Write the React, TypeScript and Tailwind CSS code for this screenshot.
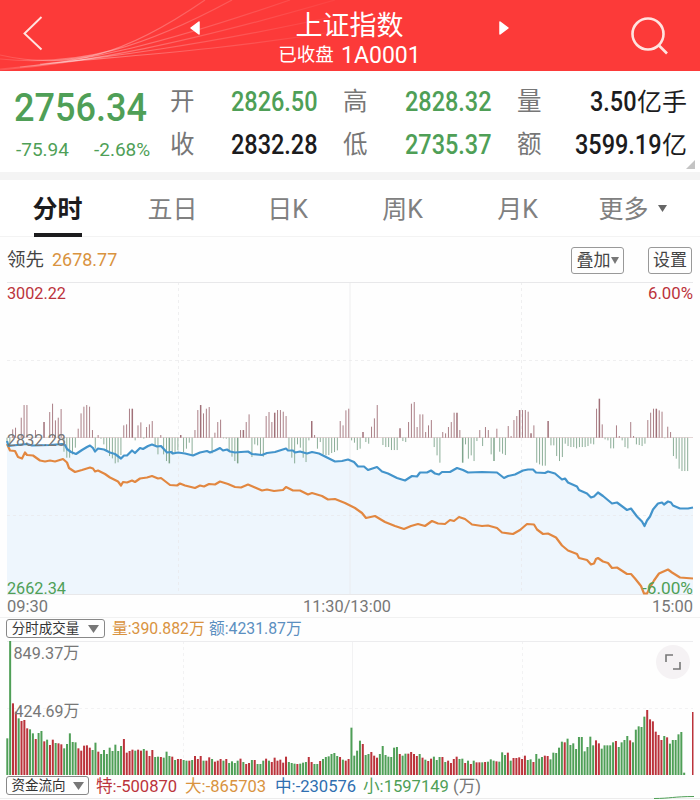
import React from 'react';
import clsx from 'clsx';

const GREEN = '#4f9f57';
const RED = '#bb333b';
const BLUE = '#4394cb';
const ORANGE = '#e28740';

// horizontal distance between two minutes on the price and volume charts
const STEP = 2.848;
const VOLUME_STEP = 2.844;

const indexLine =
  '7,441 8.5,446 17,445 27,444 32,445.500 50,445 62,444 65,445 67,449 71,452 76,454 82,450 87,447 90,445.500 93,448 95,451.500 98,448.500 104,449.500 110,452.500 115,454 121,458.500 124,455.500 127,455.500 132,450.500 135,453 140,448 143,449 148,446 152,444.500 157,446.500 161,446 167,452.500 171,452 173,453.500 178,452.500 185,453.500 193,455.500 200,452.500 207,451 210,452.500 215,450.500 220,448 223,450.500 227,449.500 230,451.500 235,452.500 241,452 248,451.500 252,454 262,455 267,453 275,452 286,448.500 288,450.500 293,450.500 295,452.500 300,451.500 307,453.500 312,452 319,453.500 325,456.500 335,461.500 342,461 348,459.500 354,462 358,466.500 364,466.500 368,470 377,467 382,471.500 388,473.500 397,478 405,480.500 412,476 417,476.500 420,472.500 427,472.500 431,470.500 435,473.500 439,474.500 442,472 450,472 457,468 460,469 463,470 468,472.500 482,472 497,472.500 504,478 508,476 515,474.500 523,470.500 528,469.500 533,469.500 536,472.500 545,473 548,471.500 555,473.500 562,479.500 565,478.500 568,482.500 577,486.500 579,490 587,493.500 591,497.500 594,496.500 598,492.500 603,496 612,503.500 617,502.500 627,510 631,508.500 637,516.500 642,521.500 644.500,526 647,520.500 650,516.500 653,509.500 658,503.500 662,502.500 664,504.500 668,501.500 671,502.500 673,505.500 680,508.500 688,508.500 693,507.500';

const leadLine =
  '7,444 10,450.500 15,451 18,457 22,458.500 25,452.500 27,455 33,455.500 40,460.500 45,461.500 50,460.500 55,461.500 63,459 67,462.500 69,468 75,472 82,470 90,467.500 93,468.500 95,471.500 98,470.500 105,474 110,477.500 118,481.500 121,485.500 123,482 127,482.500 132,480.500 135,482 140,478.500 147,477.500 152,476 158,478.500 161,478 170,485 177,485.500 180,483.500 185,485.500 195,488 200,485.500 204,486.500 209,484 215,484.500 220,481.500 228,484 235,487 241,487.500 248,484.500 255,487.500 262,490.500 267,489.500 274,491 283,490 286,487 293,490.500 300,490.500 308,494.500 312,493 322,496 328,499.500 335,499 345,503 355,508 362,513 366,518 375,516 385,522 395,526 404,529 411,526 418,524 425,526 432,521 438,523.500 445,524 450,520 454,521 459,517 465,519 472,524.500 482,526 488,525.500 497,528 502,532.500 513,534 520,530 527,524 534,524.500 537,529.500 543,534 548,533.500 556,537.500 562,545.500 568,550.500 577,554 579,558 587,560 591,564.500 594,563.500 596,559 598,558 603,561.500 608,563 612,568 617,567.500 627,574 631,574 635,578.500 641,586 644,593.500 647,593.500 650,587.500 654,580.500 659,573.500 668,569.500 672,572.500 680,577.500 693,578.500';

// one value per minute, positive above the previous close
const momentum = [
  -14, -26, 25, 30, 0, 60, 98, 98, 0, 0, 23, 0, 0, 47, 0, 77, 102, 52, 60, 86,
  -42, -60, -60, -50, -30, 27, 73, 93, 98, 93, 23, -33, 8, -3, -20, -38, -55, -62, -77, -74,
  -52, 37, 40, 87, 87, -8, 37, 46, -2, 32, 40, 50, -25, -50, 8, -50, -70, -77, -50, -45,
  -38, 8, -43, -33, -15, -55, 23, 83, 98, 73, 87, 92, -47, 15, 47, 54, -2, -3, -37, -57,
  -70, -77, 23, 23, 47, 70, -58, -20, -23, -53, -57, 65, 77, 47, 75, 83, 83, 78, 65, -35,
  -60, -77, -20, -30, -60, -73, -8, 50, 8, -33, -13, -50, -53, -52, -46, -43, -38, 50, 37, 82,
  87, -8, -15, -37, -33, 17, -13, -18, 33, 58, 98, 0, -22, -28, -28, -37, -37, -37, 28, -10,
  -13, 47, 102, 107, 32, 70, 70, 17, 37, 53, -28, -53, -75, 17, 13, 32, 47, 75, 75, 23,
  -75, -20, -63, -53, -70, -10, 23, -25, 32, 23, -50, -70, 27, -42, -48, -52, 35, 5, 53, 65,
  83, 83, 83, 78, 13, 37, -75, -80, -84, -84, 50, -23, -23, -55, -70, -58, -18, -25, -28, -28,
  -32, -28, -28, -28, -25, -18, -20, 87, 117, 40, -5, -8, -32, -32, 37, 5, -8, -28, -32, 47,
  5, -20, -22, -25, -18, 53, 75, 87, 87, 82, 78, -2, 33, 17, -55, -63, -93, -100, -100, -100,
];

const strongMinutes = [13, 44, 48, 57, 61, 68, 81, 83, 94, 107, 125, 138, 158, 160, 171, 180, 184, 190, 208, 228];

const volume = (
  'g110 g403 r215 r190 g170 r162 r165 r140 g137 g125 r108 g126 g132 r101 g106 r90 r106 g96 r95 r92 ' +
  'g80 g93 g125 g99 g98 r80 r73 r88 r89 r82 g75 g97 r70 g63 g75 g63 g82 g72 g91 g72 g87 ' +
  'r108 r67 r72 r76 g73 r76 r73 g78 r73 r57 r75 g54 g55 r54 g52 g70 g57 r55 g45 ' +
  'r48 r48 g45 g43 r43 g45 r57 r48 r57 g43 r43 r53 g48 r40 r43 r48 g43 r48 g36 g41 ' +
  'g36 g43 r49 g39 r33 r36 g45 r45 g33 g33 g43 r49 g43 r39 r52 r43 r46 r37 r55 g39 ' +
  'g36 g34 r33 g34 g37 g39 r54 r39 g33 g33 r42 g48 g54 g56 g63 g66 g57 r54 g46 r43 ' +
  'r48 g142 g58 g73 g103 r93 g60 g63 r69 r58 r52 g63 g87 g60 g55 g54 g82 g84 r63 g58 ' +
  'g64 r64 r69 r63 r57 g63 r52 g46 r42 r49 g55 g45 g54 r54 g39 r43 r36 r48 r55 g48 ' +
  'g49 r36 g43 r33 g43 r38 r38 g38 r39 g40 g47 g43 r41 g40 g68 g60 r67 g43 r51 r51 r53 r48 ' +
  'r58 g45 g47 r39 g63 g49 g54 r58 r57 g47 g67 g66 g82 g100 r98 g109 g90 g95 g78 g114 ' +
  'g114 g71 g84 g115 g89 r104 r95 g79 g89 g89 g89 g98 r102 g84 g98 g105 g117 r104 g98 g136 ' +
  'g146 g144 g175 r195 r167 r161 r130 r120 r105 g117 r113 g94 g105 g105 g122 g129 g7'
).split(' ');

const quotes = [
  { label: '开', value: '2826.50', tone: 'text-[#4f9f57]' },
  { label: '高', value: '2828.32', tone: 'text-[#4f9f57]' },
  { label: '量', value: '3.50', unit: '亿手', tone: 'text-[#1c1c1e]' },
  { label: '收', value: '2832.28', tone: 'text-[#1c1c1e]' },
  { label: '低', value: '2735.37', tone: 'text-[#4f9f57]' },
  { label: '额', value: '3599.19', unit: '亿', tone: 'text-[#1c1c1e]' },
];

const tabs = ['分时', '五日', '日K', '周K', '月K', '更多'];

const flows = [
  { label: '特', value: '-500870', tone: 'text-[#bb333b]', width: 'w-[89px]' },
  { label: '大', value: '-865703', tone: 'text-[#d9933f]', width: 'w-[90px]' },
  { label: '中', value: '-230576', tone: 'text-[#2f6fb0]', width: 'w-[88px]' },
  { label: '小', value: '1597149', tone: 'text-[#4f9f57]', width: 'w-[90px]' },
];

type LabelProps = {
  x: number;
  y: number;
  width: number;
  fill: string;
  children: React.ReactNode;
};

const ChartLabel = ({ x, y, width, fill, children }: LabelProps) => (
  <text x={x} y={y} fill={fill} fontSize={16.5} textLength={width} lengthAdjust="spacingAndGlyphs">
    {children}
  </text>
);

const Triangle = ({ className }: { className?: string }) => (
  <svg className={className} viewBox="0 0 12 10" preserveAspectRatio="none">
    <path d="M0 0H12L6 10Z" fill="currentColor" />
  </svg>
);

const Header = () => (
  <header className="relative flex h-[71px] shrink-0 items-center justify-between bg-[#fc3a39] text-white">
    <svg className="absolute inset-0" width="700" height="71" fill="none">
      <defs>
        <linearGradient id="wave" gradientUnits="userSpaceOnUse" x1="0" y1="0" x2="340" y2="0">
          <stop offset="0" stopColor="#fff" stopOpacity="0.12" />
          <stop offset="0.25" stopColor="#fff" stopOpacity="0.36" />
          <stop offset="0.6" stopColor="#fff" stopOpacity="0.18" />
          <stop offset="1" stopColor="#fff" stopOpacity="0.04" />
        </linearGradient>
      </defs>
      <g stroke="url(#wave)" strokeWidth="1.200">
        <path d="M0 55C70 71 125 55 205 0" />
        <path d="M0 59C80 67 145 47 232 0" />
        <path d="M0 69C90 62 165 43 290 0" />
        <path d="M0 70C90 62 180 45 335 0" />
        <path d="M20 67C110 57 200 46 345 14" />
        <path d="M40 64C120 56 210 52 345 30" />
      </g>
    </svg>
    <svg className="relative ml-[22px] mt-[-5px]" width="22" height="36" fill="none" stroke="#ffe3df" strokeWidth="1.900">
      <path d="M19.500 2L2.500 18.500L19.500 34.500" />
    </svg>
    <div className="relative ml-[25px] flex w-[321px] justify-between">
      <svg className="mt-[18px]" width="12" height="16">
        <path d="M2 8L10 2V14Z" fill="#fff" stroke="#fff" strokeWidth="1.500" strokeLinejoin="round" />
      </svg>
      <div className="flex flex-col items-center">
        <div className="mt-[8px] h-[32px] text-[27px] leading-[32px]">上证指数</div>
        <div className="flex h-[27px] items-center gap-[7px] text-[18.500px] leading-[27px]">
          已收盘<span className="text-[23.500px]">
            <span className="inline-block w-[80px] origin-left scale-x-[0.980]">1A0001</span>
          </span>
        </div>
      </div>
      <svg className="mt-[18px]" width="12" height="16">
        <path d="M10 8L2 2V14Z" fill="#fff" stroke="#fff" strokeWidth="1.500" strokeLinejoin="round" />
      </svg>
    </div>
    <svg className="relative mr-[30px]" width="40" height="40" fill="none" stroke="#ffe3df" strokeWidth="2.600">
      <circle cx="18" cy="18" r="15.500" />
      <path d="M28.500 29L37 37.500" />
    </svg>
  </header>
);

const Quote = () => (
  <section className="relative flex h-[101px] shrink-0 bg-white">
    <div className="w-[170px] shrink-0 pl-[14px] text-[#4f9f57]">
      <div className="mt-[14px] h-[46px] origin-left scale-x-[0.925] text-[39px] font-medium leading-[46px]">2756.34</div>
      <div className="mt-[8px] flex h-[22px] w-[137px] justify-between text-[19px] leading-[22px]">
        <span className="w-[54px] pl-[2px]">-75.94</span>
        <span className="w-[57px]">-2.68%</span>
      </div>
    </div>
    <div className="grid h-[86px] w-[517px] grid-cols-[148px_149px_170px] gap-x-[25px] pt-[10px]">
      {quotes.map((quote) => (
        <div key={quote.label} className="flex h-[43px] items-center justify-between">
          <span className="text-[24.500px] text-[#777]">{quote.label}</span>
          <span className={clsx('flex items-center text-[27px] font-medium', quote.tone)}>
            <span className="origin-right scale-x-[0.870]">{quote.value}</span>
            {quote.unit && <span className="text-[25px] font-normal">{quote.unit}</span>}
          </span>
        </div>
      ))}
    </div>
    <svg className="absolute bottom-[3px] right-[5px]" width="9" height="9">
      <path d="M9 0V9H0Z" fill="#c4c4c4" />
    </svg>
  </section>
);

const Tabs = () => (
  <nav className="flex h-[57px] shrink-0 border-b border-[#f3f3f3] bg-white text-[25px] text-[#808080]">
    {tabs.map((tab, index) => (
      <div
        key={tab}
        className={clsx(
          'relative flex w-[115px] shrink-0 items-center justify-center pt-[4px]',
          index === 0 && 'font-bold text-[#1c1c1e]'
        )}
      >
        {tab}
        {index === 0 && <span className="absolute bottom-[-1px] h-[4px] w-[48px] bg-[#1c1c1e]" />}
        {tab === '更多' && <Triangle className="mb-[3px] ml-[9px] h-[7px] w-[9px] text-[#666]" />}
      </div>
    ))}
  </nav>
);

const ChartToolbar = () => (
  <div className="flex h-[45px] shrink-0 items-center pl-[7px] pr-[8px] pt-[2px] text-[#444]">
    <span className="text-[18.500px]">领先</span>
    <span className="ml-[8px] w-[64px] origin-left scale-x-[0.945] text-[19px] text-[#d9933f]">2678.77</span>
    <div className="ml-auto flex gap-[24px] text-[17px]">
      <button className="flex h-[27px] w-[53px] items-center justify-center rounded-[3px] border border-[#999]">
        叠加
        <Triangle className="h-[7px] w-[8px] text-[#777]" />
      </button>
      <button className="flex h-[27px] w-[44px] items-center justify-center rounded-[3px] border border-[#999]">设置</button>
    </div>
  </div>
);

const PriceChart = () => (
  <svg className="shrink-0" width="700" height="335" viewBox="0 282 700 335" fill="none">
    <polygon points={`7,594.500 ${indexLine} 693,594.500`} fill="#eef6fd" />
    <g stroke="#e8e8ea">
      <path d="M7 282.500H693M7 594.500H693" />
      <path d="M350 282V594" strokeOpacity="0.700" />
      <path d="M178.500 282V594M521.500 282V594M7 360.500H693M7 515.500H693" strokeDasharray="3 3" strokeOpacity="0.700" />
    </g>
    <path d="M7 437.500H693" stroke="#e3d5d5" />
    {momentum.map((value, minute) => (
      <line
        key={minute}
        x1={7 + minute * STEP}
        x2={7 + minute * STEP}
        y1={437.700}
        y2={437.700 - value / 3}
        stroke={value > 0 ? '#a07078' : '#7fa58c'}
        strokeWidth={strongMinutes.includes(minute) ? 1.5 : 0.9}
      />
    ))}
    <polyline points={leadLine} stroke={ORANGE} strokeWidth="2.200" strokeLinejoin="round" />
    <polyline points={indexLine} stroke={BLUE} strokeWidth="2.200" strokeLinejoin="round" />
    <ChartLabel x={7} y={299} width={59} fill={RED}>3002.22</ChartLabel>
    <ChartLabel x={648} y={299} width={45} fill={RED}>6.00%</ChartLabel>
    <ChartLabel x={7} y={445.5} width={59} fill="#777">2832.28</ChartLabel>
    <ChartLabel x={7} y={593.5} width={59} fill={GREEN}>2662.34</ChartLabel>
    <ChartLabel x={642} y={593.5} width={51} fill={GREEN}>-6.00%</ChartLabel>
    <ChartLabel x={7} y={611.5} width={41} fill="#777">09:30</ChartLabel>
    <ChartLabel x={303} y={611.5} width={88} fill="#777">11:30/13:00</ChartLabel>
    <ChartLabel x={652} y={611.5} width={41} fill="#777">15:00</ChartLabel>
  </svg>
);

const VolumeHeader = () => (
  <div className="flex h-[24px] shrink-0 items-center border-t border-[#f1f1f1] pb-[2px] pl-[6px] text-[16px]">
    <button className="flex h-[19px] w-[99px] items-center justify-center gap-[9px] rounded-[3px] border border-[#888] text-[13.500px] text-[#333]">
      分时成交量
      <Triangle className="h-[8px] w-[11px] text-[#777]" />
    </button>
    <span className="ml-[7px] w-[97px] origin-left scale-x-[0.985] whitespace-nowrap text-[#d9933f]">量:390.882万</span>
    <span className="origin-left scale-x-[0.985] whitespace-nowrap text-[#5b8fc0]">额:4231.87万</span>
  </div>
);

const VolumeChart = () => (
  <div className="relative h-[134px] shrink-0">
    <svg width="700" height="134" viewBox="0 641 700 134" fill="none">
      <g stroke="#ececee">
        <path d="M7 641.500H693" />
        <path d="M352.500 641V775" strokeOpacity="0.700" />
        <path d="M183.500 641V775M522.500 641V775M7 708.500H693" strokeDasharray="3 3" strokeOpacity="0.700" />
      </g>
      {volume.map((bar, minute) => {
        const height = Number(bar.slice(1)) / 3;
        return (
          <rect
            key={minute}
            x={6.3 + minute * VOLUME_STEP}
            y={775 - height}
            width={2}
            height={height}
            fill={bar[0] === 'g' ? GREEN : RED}
          />
        );
      })}
      <rect x="692" y="712" width="1.500" height="63" fill={RED} />
      <ChartLabel x={13.5} y={658.500} width={66} fill="#777">849.37万</ChartLabel>
      <ChartLabel x={14.5} y={716.500} width={65} fill="#777">424.69万</ChartLabel>
    </svg>
    <button className="absolute right-[10px] top-[4px] flex size-[34px] items-center justify-center rounded-full bg-[#f5f2f4]">
      <svg width="16" height="16" fill="none" stroke="#777" strokeWidth="1.600">
        <path d="M1 8V1H8M15 8V15H8" />
      </svg>
    </button>
  </div>
);

const FundFlow = () => (
  <div className="relative flex h-[24px] shrink-0 items-start border-b border-[#ececec] pl-[6px] text-[16.600px]">
    <button className="mt-[1px] flex h-[19px] w-[83px] items-center justify-center gap-[7px] rounded-[3px] border border-[#888] text-[13.500px] text-[#333]">
      资金流向
      <Triangle className="h-[8px] w-[11px] text-[#777]" />
    </button>
    <div className="ml-[7px] flex leading-[23px]">
      {flows.map((flow) => (
        <span key={flow.label} className={clsx('whitespace-nowrap', flow.width, flow.tone)}>
          {flow.label}:{flow.value}
        </span>
      ))}
      <span className="text-[#777]">(万)</span>
    </div>
    <svg className="absolute bottom-[-1px] right-[6px]" width="40" height="3" fill="none" stroke={GREEN}>
      <path d="M0 2.500C16 2.500 20 0.500 40 0.500" />
    </svg>
  </div>
);

export default function App() {
  return (
    <div className="flex h-[800px] w-[700px] flex-col overflow-hidden bg-[#fefefe] font-[Roboto,'Noto_Sans_CJK_SC',sans-serif]">
      <Header />
      <Quote />
      <div className="h-[8px] shrink-0 bg-[#f4f4f4]" />
      <Tabs />
      <ChartToolbar />
      <PriceChart />
      <VolumeHeader />
      <VolumeChart />
      <FundFlow />
    </div>
  );
}
